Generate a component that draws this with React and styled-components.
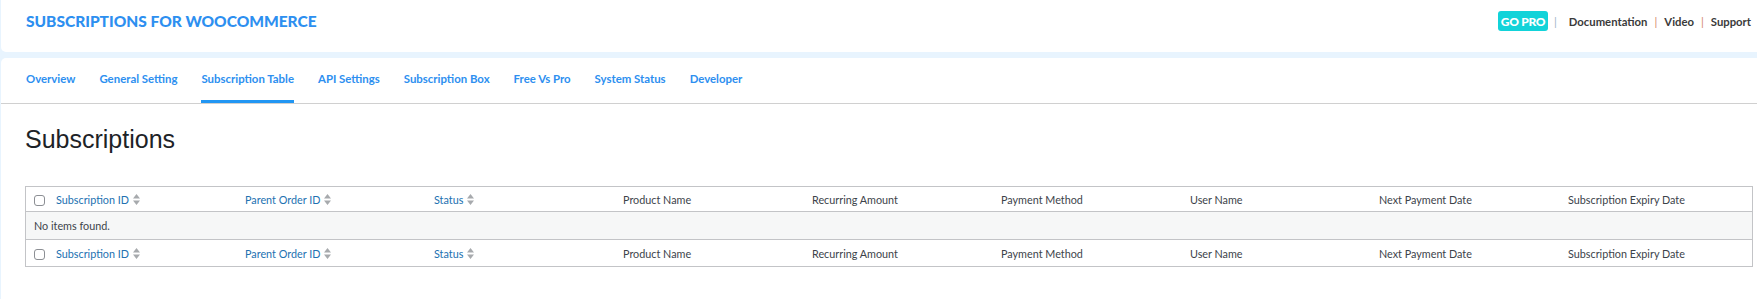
import styled, { createGlobalStyle } from 'styled-components';

const GlobalStyle = createGlobalStyle`
  html, body {
    margin: 0;
    padding: 0;
    background: #e8f4fe;
  }
  * {
    box-sizing: border-box;
  }
`;

const Page = styled.div`
  padding-left: 1px;
  font-family: Lato, "Noto Sans", sans-serif;
`;

const HeaderCard = styled.header`
  height: 52px;
  background: #fff;
  border-radius: 0 0 0 5px;
  display: flex;
  align-items: center;
  justify-content: space-between;
  padding: 0 6px 10px 25px;
`;

const Brand = styled.h1`
  margin: 0;
  font-size: 15.5px;
  font-weight: 900;
  color: #2d8ff0;
`;

const HeaderNav = styled.nav`
  display: flex;
  align-items: center;
  font-size: 11.3px;
  font-weight: 700;
`;

const Badge = styled.a`
  display: inline-flex;
  align-items: center;
  justify-content: center;
  width: 50px;
  height: 20px;
  border-radius: 3px;
  background: #12d3d9;
  color: #fff;
  font-size: 12px;
  font-weight: 900;
  letter-spacing: -0.3px;
  text-decoration: none;
`;

const Sep = styled.span`
  color: ${({ $muted }) => ($muted ? '#9fb6c8' : '#d48a6e')};
  font-weight: 400;
  margin: ${({ $wide }) => ($wide ? '0 12px 0 6px' : '0 7px')};
`;

const NavLink = styled.a`
  color: #3a3a3a;
  text-decoration: none;
`;

const MainCard = styled.main`
  margin-top: 6px;
  background: #fff;
  border-radius: 5px 0 0 0;
  min-height: calc(100vh - 58px);
`;

const TabBar = styled.div`
  display: flex;
  gap: 24px;
  padding-left: 25px;
  border-bottom: 1px solid #d0d0d0;
`;

const Tab = styled.a`
  padding: 13px 0;
  line-height: 16px;
  font-size: 11.4px;
  font-weight: 700;
  color: #2d8ff0;
  text-decoration: none;
  border-bottom: 3px solid ${({ $active }) => ($active ? '#2196f3' : 'transparent')};
`;

const Content = styled.section`
  padding: 20px 4px 0 24px;
`;

const Title = styled.h2`
  margin: 0 0 32px;
  font-family: "Liberation Sans", Arial, sans-serif;
  font-size: 25px;
  line-height: 30px;
  font-weight: 400;
  color: #1d2327;
`;

const Table = styled.table`
  width: 100%;
  table-layout: fixed;
  border-collapse: separate;
  border-spacing: 0;
  border: 1px solid #c3c4c7;
  font-size: 10.8px;
`;

const HeadCell = styled.th`
  height: ${({ $foot }) => ($foot ? '27px' : '25px')};
  padding: 0 10px;
  text-align: left;
  font-weight: 400;
  color: ${({ $sortable }) => ($sortable ? '#2271b1' : '#3c434a')};
  border-${({ $foot }) => ($foot ? 'top' : 'bottom')}: 1px solid #c3c4c7;
  white-space: nowrap;
`;

const CheckCell = styled(HeadCell)`
  padding: 0 0 0 8px;
`;

const Check = styled.span`
  display: block;
  width: 11px;
  height: 11px;
  margin-top: 2px;
  border: 1px solid #8c8f94;
  border-radius: 3px;
  background: #fff;
`;

const SortLabel = styled.span`
  display: inline-flex;
  align-items: center;
  gap: 4px;
`;

const EmptyCell = styled.td`
  height: 27px;
  padding: 0 8px;
  background: #f6f7f7;
  color: #3c434a;
`;

const SortIcon = () => (
  <svg width="7" height="11" viewBox="0 0 7 11" aria-hidden="true">
    <path d="M0 4.5 L3.5 0 L7 4.5 Z M0 6.5 L7 6.5 L3.5 11 Z" fill="#a7aaad" />
  </svg>
);

const tabs = [
  'Overview',
  'General Setting',
  'Subscription Table',
  'API Settings',
  'Subscription Box',
  'Free Vs Pro',
  'System Status',
  'Developer',
];

const columns = [
  { label: 'Subscription ID', sortable: true },
  { label: 'Parent Order ID', sortable: true },
  { label: 'Status', sortable: true },
  { label: 'Product Name' },
  { label: 'Recurring Amount' },
  { label: 'Payment Method' },
  { label: 'User Name' },
  { label: 'Next Payment Date' },
  { label: 'Subscription Expiry Date' },
];

const HeaderRow = ({ foot }) => (
  <tr>
    <CheckCell $foot={foot}>
      <Check />
    </CheckCell>
    {columns.map((col) => (
      <HeadCell key={col.label} $foot={foot} $sortable={col.sortable}>
        {col.sortable ? (
          <SortLabel>
            {col.label}
            <SortIcon />
          </SortLabel>
        ) : (
          col.label
        )}
      </HeadCell>
    ))}
  </tr>
);

export default function App() {
  return (
    <>
      <GlobalStyle />
      <Page>
        <HeaderCard>
          <Brand>SUBSCRIPTIONS FOR WOOCOMMERCE</Brand>
          <HeaderNav>
            <Badge href="#">GO PRO</Badge>
            <Sep $muted $wide>|</Sep>
            <NavLink href="#">Documentation</NavLink>
            <Sep>|</Sep>
            <NavLink href="#">Video</NavLink>
            <Sep>|</Sep>
            <NavLink href="#">Support</NavLink>
          </HeaderNav>
        </HeaderCard>

        <MainCard>
          <TabBar>
            {tabs.map((t) => (
              <Tab key={t} href="#" $active={t === 'Subscription Table'}>
                {t}
              </Tab>
            ))}
          </TabBar>

          <Content>
            <Title>Subscriptions</Title>
            <Table>
              <colgroup>
                <col style={{ width: 20 }} />
                {columns.map((c, i) => (
                  <col key={c.label} style={i < 8 ? { width: 189 } : undefined} />
                ))}
              </colgroup>
              <thead>
                <HeaderRow />
              </thead>
              <tbody>
                <tr>
                  <EmptyCell colSpan={10}>No items found.</EmptyCell>
                </tr>
              </tbody>
              <tfoot>
                <HeaderRow foot />
              </tfoot>
            </Table>
          </Content>
        </MainCard>
      </Page>
    </>
  );
}
